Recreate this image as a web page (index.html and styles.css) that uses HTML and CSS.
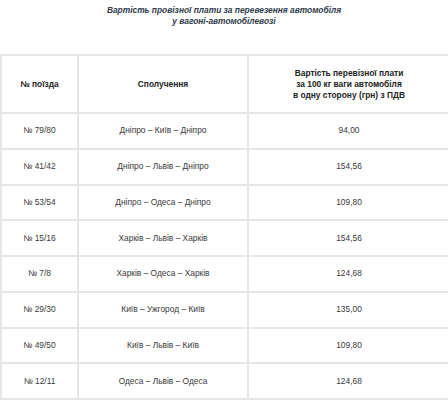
FILE: index.html
```html
<!DOCTYPE html>
<html lang="uk">
<head>
<meta charset="utf-8">
<title>Вартість провізної плати</title>
<link rel="stylesheet" href="styles.css">
</head>
<body>
<div class="page">
  <h1 class="title">Вартість провізної плати за перевезення автомобіля<br>у вагоні-автомобілевозі</h1>
  <table class="fares">
    <colgroup>
      <col class="c1">
      <col class="c2">
      <col class="c3">
    </colgroup>
    <thead>
      <tr class="head">
        <th>№ поїзда</th>
        <th>Сполучення</th>
        <th>Вартість перевізної плати<br>за 100 кг ваги автомобіля<br>в одну сторону (грн) з ПДВ</th>
      </tr>
    </thead>
    <tbody>
      <tr><td>№ 79/80</td><td>Дніпро – Київ – Дніпро</td><td>94,00</td></tr>
      <tr><td>№ 41/42</td><td>Дніпро – Львів – Дніпро</td><td>154,56</td></tr>
      <tr><td>№ 53/54</td><td>Дніпро – Одеса – Дніпро</td><td>109,80</td></tr>
      <tr><td>№ 15/16</td><td>Харків – Львів – Харків</td><td>154,56</td></tr>
      <tr><td>№ 7/8</td><td>Харків – Одеса – Харків</td><td>124,68</td></tr>
      <tr><td>№ 29/30</td><td>Київ – Ужгород – Київ</td><td>135,00</td></tr>
      <tr><td>№ 49/50</td><td>Київ – Львів – Київ</td><td>109,80</td></tr>
      <tr><td>№ 12/11</td><td>Одеса – Львів – Одеса</td><td>124,68</td></tr>
    </tbody>
  </table>
</div>
</body>
</html>
```
FILE: styles.css
```css
html, body {
  margin: 0;
  padding: 0;
  background: #ffffff;
}
.page {
  font-family: "Liberation Sans", Arial, sans-serif;
  color: #333333;
}
.title {
  margin: 0;
  padding-top: 5px;
  height: 50px;
  box-sizing: border-box;
  text-align: center;
  font-size: 8.4px;
  line-height: 11px;
  font-weight: bold;
  font-style: italic;
  color: #2f3a4a;
}
.fares {
  border-collapse: collapse;
  table-layout: fixed;
  width: 449px;
  margin-top: 4px;
  font-size: 8.4px;
  line-height: 11px;
}
.c1 { width: 77px; }
.c2 { width: 170px; }
.c3 { width: 202px; }
.fares th,
.fares td {
  border: 2px solid #e6e6e6;
  text-align: center;
  vertical-align: middle;
  padding: 0 4px;
}
.fares th {
  font-weight: bold;
  color: #222222;
}
.fares td {
  color: #3a3a3a;
}
.head {
  height: 58px;
}
.fares tbody tr {
  height: 35.75px;
}
```
